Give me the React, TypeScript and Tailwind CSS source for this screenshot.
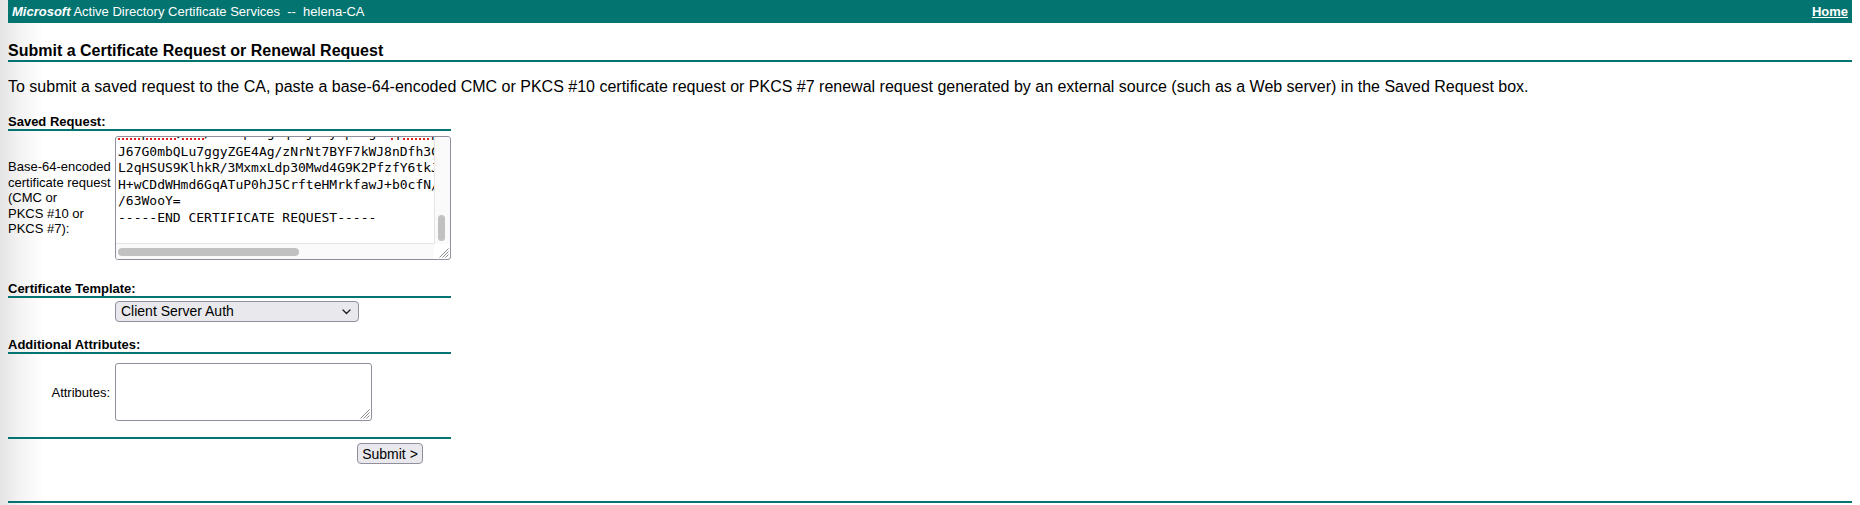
import React from "react";

const Grip = () => (
  <svg width="12" height="12" viewBox="0 0 12 12" className="absolute bottom-[1px] right-[1px]">
    <line x1="11.5" y1="2.5" x2="2.5" y2="11.5" stroke="#8a8a8a" strokeWidth="1" />
    <line x1="11.5" y1="5.5" x2="5.5" y2="11.5" stroke="#8a8a8a" strokeWidth="1" />
    <line x1="11.5" y1="8.5" x2="8.5" y2="11.5" stroke="#8a8a8a" strokeWidth="1" />
  </svg>
);

const BigTextarea = () => (
  <div className="relative h-[124px] w-[336px] shrink-0 overflow-hidden rounded-[3px] border border-[#8f8f9d] bg-white">
    <div className="-mt-[12px] whitespace-pre pl-[2px] font-['DejaVu_Sans_Mono',monospace] text-[13px] leading-[16.5px] text-black">
      <div className="h-[18.5px]">
        <span className="underline decoration-[#e0201b] decoration-dotted decoration-2 underline-offset-[1px]">tHvpNsbQdwK</span>
        /8Ae1pY4g9q3Rj+7yWp2xg5U
        <span className="underline decoration-[#e0201b] decoration-dotted decoration-2 underline-offset-[1px]">qfdhwpTyLcQzkR</span>
      </div>
      <div>J67G0mbQLu7ggyZGE4Ag/zNrNt7BYF7kWJ8nDfh3CpVQ1x8aT2mRkzLd9ePq4sYw</div>
      <div>L2qHSUS9KlhkR/3MxmxLdp30Mwd4G9K2PfzfY6tkJ0bHn5WcZrQe8vTy1uAs7mGi</div>
      <div>H+wCDdWHmd6GqATuP0hJ5CrfteHMrkfawJ+b0cfN/Xk2pR8sLq3vWd0yTz6eHb4n</div>
      <div>/63WooY=</div>
      <div>-----END CERTIFICATE REQUEST-----</div>
    </div>
    {/* vertical scrollbar */}
    <div className="absolute right-0 top-0 h-[107px] w-[16px] border-l border-[#e4e4e4] bg-[#fafafa]">
      <div className="absolute left-[3px] top-[78px] h-[26px] w-[7px] rounded-full bg-[#c1c1c1]" />
    </div>
    {/* horizontal scrollbar */}
    <div className="absolute bottom-0 left-0 h-[16px] w-[318px] border-t border-[#e4e4e4] bg-[#fafafa]">
      <div className="absolute left-[2px] top-[4px] h-[8px] w-[181px] rounded-full bg-[#c1c1c1]" />
    </div>
    <Grip />
  </div>
);

const SectionTitle = ({ children, className = "" }: { children: React.ReactNode; className?: string }) => (
  <div className={`border-b-2 border-[#037470] text-[13px] font-bold leading-[15px] ${className}`}>{children}</div>
);

export default function App() {
  return (
    <div className="min-h-[505px] bg-[linear-gradient(to_right,#e4e4e4_0px,#f2f2f2_18px,#ffffff_44px)] px-[8px] font-['Liberation_Sans',Arial,sans-serif] text-black">
      <div className="flex h-[23px] items-center justify-between bg-[#037470] px-[4px] text-white">
        <div className="whitespace-pre text-[13px] leading-[15px]">
          <span className="font-bold italic">Microsoft</span>
          {" Active Directory Certificate Services \u00a0--\u00a0 helena-CA"}
        </div>
        <a className="text-[13px] font-bold leading-[15px] underline">Home</a>
      </div>

      <h1 className="mt-[19px] border-b-2 border-[#037470] text-[16px] font-bold leading-[18px]">
        Submit a Certificate Request or Renewal Request
      </h1>

      <p className="mt-[16px] text-[16px] leading-[18px]">
        To submit a saved request to the CA, paste a base-64-encoded CMC or PKCS #10 certificate request or PKCS #7
        renewal request generated by an external source (such as a Web server) in the Saved Request box.
      </p>

      <div className="w-[443px]">
        <SectionTitle className="mt-[18px]">Saved Request:</SectionTitle>
        <div className="mt-[5px] flex items-center">
          <div className="w-[107px] shrink-0 text-[13px] leading-[15.5px]">
            Base-64-encoded
            <br />
            certificate request
            <br />
            (CMC or
            <br />
            PKCS #10 or
            <br />
            PKCS #7):
          </div>
          <BigTextarea />
        </div>

        <SectionTitle className="mt-[21px]">Certificate Template:</SectionTitle>
        <div className="mt-[3px] flex">
          <div className="ml-[107px] flex h-[21px] w-[244px] items-center justify-between rounded-[4px] border border-[#8f8f9d] bg-[#e9e9ed] pl-[5px] pr-[7px] text-[14px] leading-[17px]">
            <span>Client Server Auth</span>
            <svg width="9" height="6" viewBox="0 0 9 6">
              <path d="M1 1 L4.5 4.5 L8 1" fill="none" stroke="#222" strokeWidth="1.4" strokeLinecap="round" strokeLinejoin="round" />
            </svg>
          </div>
        </div>

        <SectionTitle className="mt-[15px]">Additional Attributes:</SectionTitle>
        <div className="mt-[9px] flex items-center">
          <div className="w-[107px] shrink-0 pr-[5px] text-right text-[13px] leading-[15px]">Attributes:</div>
          <div className="relative h-[58px] w-[257px] rounded-[3px] border border-[#8f8f9d] bg-white">
            <Grip />
          </div>
        </div>

        <div className="mt-[16px] h-[2px] bg-[#037470]" />
        <div className="mt-[4px] flex justify-end pr-[28px]">
          <button className="flex h-[21px] w-[66px] items-center justify-center rounded-[4px] border border-[#8f8f9d] bg-[#e9e9ed] text-[14px] leading-[16px] text-black">
            Submit &gt;
          </button>
        </div>
      </div>

      <div className="mt-[37px] h-[2px] bg-[#037470]" />
    </div>
  );
}
